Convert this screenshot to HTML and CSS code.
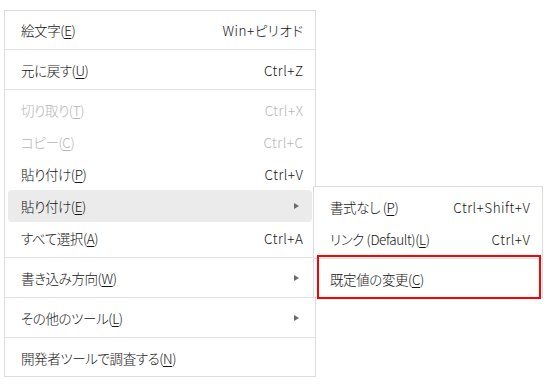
FILE: index.html
```html
<!DOCTYPE html>
<html lang="ja">
<head>
<meta charset="utf-8">
<link rel="stylesheet" href="styles.css">
</head>
<body>
<div class="stage">
  <div class="menu main">
    <div class="item"><span class="label">絵文字(<u>E</u>)</span><span class="key">Win+ピリオド</span></div>
    <div class="sep"></div>
    <div class="item"><span class="label">元に戻す(<u>U</u>)</span><span class="key">Ctrl+Z</span></div>
    <div class="sep"></div>
    <div class="item disabled"><span class="label">切り取り(<u>T</u>)</span><span class="key">Ctrl+X</span></div>
    <div class="item disabled"><span class="label">コピー(<u>C</u>)</span><span class="key">Ctrl+C</span></div>
    <div class="item"><span class="label">貼り付け(<u>P</u>)</span><span class="key">Ctrl+V</span></div>
    <div class="item active"><span class="label">貼り付け(<u>E</u>)</span><span class="arrow"></span></div>
    <div class="item"><span class="label">すべて選択(<u>A</u>)</span><span class="key">Ctrl+A</span></div>
    <div class="sep"></div>
    <div class="item"><span class="label">書き込み方向(<u>W</u>)</span><span class="arrow"></span></div>
    <div class="sep"></div>
    <div class="item"><span class="label">その他のツール(<u>L</u>)</span><span class="arrow"></span></div>
    <div class="sep"></div>
    <div class="item"><span class="label">開発者ツールで調査する(<u>N</u>)</span></div>
  </div>
  <div class="menu sub">
    <div class="item"><span class="label">書式なし (<u>P</u>)</span><span class="key">Ctrl+Shift+V</span></div>
    <div class="item"><span class="label">リンク (Default)(<u>L</u>)</span><span class="key">Ctrl+V</span></div>
    <div class="sep"></div>
    <div class="item"><span class="label">既定値の変更(<u>C</u>)</span></div>
  </div>
  <div class="mark"></div>
</div>
</body>
</html>
```
FILE: styles.css
```css
html, body {
  margin: 0;
  background: #ffffff;
}
body {
  font-family: "Noto Sans CJK JP", "Noto Sans", sans-serif;
  font-size: 13.5px;
  font-weight: 300;
  font-feature-settings: "palt" 1;
  color: #141414;
}
.stage {
  position: relative;
  width: 550px;
  height: 386px;
}
.menu {
  background: #ffffff;
  border: 1px solid #dcdcdc;
  box-sizing: border-box;
  display: flex;
  flex-direction: column;
  padding: 3px 0 2px;
}
.main {
  position: absolute;
  left: 4px;
  top: 10px;
  width: 312px;
}
.sub {
  position: absolute;
  left: 313px;
  top: 186px;
  width: 230px;
  padding: 4px 0 2px;
}
.item {
  height: 32px;
  margin: 0 3px;
  padding: 0 9px 0 13px;
  border-radius: 4px;
  display: flex;
  align-items: center;
  justify-content: space-between;
  white-space: nowrap;
}
.label {
  letter-spacing: -0.4px;
}
.key {
  letter-spacing: 0.5px;
  margin-right: -0.5px;
}
.item u {
  text-decoration-thickness: 1px;
  text-underline-offset: 2px;
}
.item.active {
  background: #ebebeb;
}
.item.disabled {
  color: #b5b5b5;
}
.arrow {
  width: 0;
  height: 0;
  margin-right: 4px;
  border-top: 3.5px solid transparent;
  border-bottom: 3.5px solid transparent;
  border-left: 5px solid #6a6a6a;
}
.sep {
  height: 1px;
  background: #e0e0e0;
  margin: 3px 0 4px;
}
.mark {
  position: absolute;
  left: 317px;
  top: 255px;
  width: 224px;
  height: 44px;
  box-sizing: border-box;
  border: 2px solid #ff0000;
}
```
